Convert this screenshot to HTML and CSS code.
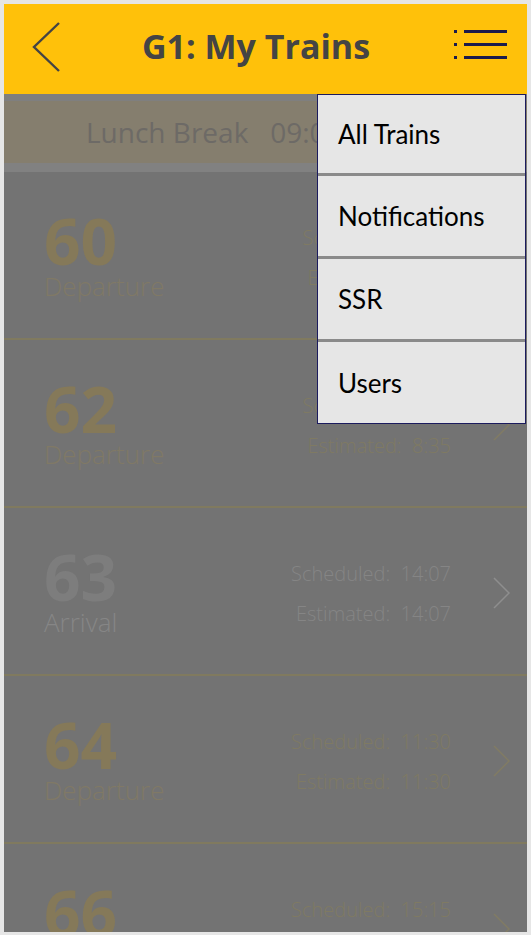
FILE: index.html
```html
<!DOCTYPE html>
<html lang="en">
<head>
    <meta charset="UTF-8">
    <meta name="viewport" content="width=device-width, initial-scale=1.0">
    <title>G1: My Trains</title>
    <link rel="stylesheet" href="styles.css">
</head>
<body>
    <div class="app">
        <div class="header">
            <div class="back-btn">
                <svg width="30" height="52" viewBox="0 0 30 52">
                    <polyline points="27,2 2,26 27,50" fill="none" stroke="#444" stroke-width="2.4"/>
                </svg>
            </div>
            <h1>G1: My Trains</h1>
            <div class="menu-btn">
                <svg width="54" height="32" viewBox="0 0 54 32">
                    <rect x="0" y="1" width="3" height="3" fill="#1b1b4b"/>
                    <rect x="0" y="14" width="3" height="3" fill="#1b1b4b"/>
                    <rect x="0" y="27" width="3" height="3" fill="#1b1b4b"/>
                    <rect x="10" y="1" width="43" height="3" fill="#1b1b4b"/>
                    <rect x="10" y="14" width="43" height="3" fill="#1b1b4b"/>
                    <rect x="10" y="27" width="43" height="3" fill="#1b1b4b"/>
                </svg>
            </div>
        </div>

        <div class="content">
            <div class="top-strip"></div>
            <div class="lunch-bar">Lunch Break   09:00 - 10:00</div>
            <div class="bottom-strip"></div>

            <!-- Train rows -->
            <div class="train-row">
                <div class="train-id">
                    <div class="train-num">60</div>
                    <div class="train-type">Departure</div>
                </div>
                <div class="train-times">
                    <div>Scheduled:  8:05</div>
                    <div>Estimated:  8:05</div>
                </div>
                <div class="chevron">
                    <svg width="18" height="32" viewBox="0 0 18 32"><polyline points="1,1 16,16 1,31" fill="none" stroke="currentColor" stroke-width="1.5"/></svg>
                </div>
            </div>

            <div class="train-row">
                <div class="train-id">
                    <div class="train-num">62</div>
                    <div class="train-type">Departure</div>
                </div>
                <div class="train-times">
                    <div>Scheduled:  8:35</div>
                    <div>Estimated:  8:35</div>
                </div>
                <div class="chevron">
                    <svg width="18" height="32" viewBox="0 0 18 32"><polyline points="1,1 16,16 1,31" fill="none" stroke="currentColor" stroke-width="1.5"/></svg>
                </div>
            </div>

            <div class="train-row arrival">
                <div class="train-id">
                    <div class="train-num">63</div>
                    <div class="train-type">Arrival</div>
                </div>
                <div class="train-times">
                    <div>Scheduled:  14:07</div>
                    <div>Estimated:  14:07</div>
                </div>
                <div class="chevron">
                    <svg width="18" height="32" viewBox="0 0 18 32"><polyline points="1,1 16,16 1,31" fill="none" stroke="currentColor" stroke-width="1.5"/></svg>
                </div>
            </div>

            <div class="train-row">
                <div class="train-id">
                    <div class="train-num">64</div>
                    <div class="train-type">Departure</div>
                </div>
                <div class="train-times">
                    <div>Scheduled:  11:30</div>
                    <div>Estimated:  11:30</div>
                </div>
                <div class="chevron">
                    <svg width="18" height="32" viewBox="0 0 18 32"><polyline points="1,1 16,16 1,31" fill="none" stroke="currentColor" stroke-width="1.5"/></svg>
                </div>
            </div>

            <div class="train-row">
                <div class="train-id">
                    <div class="train-num">66</div>
                    <div class="train-type">Departure</div>
                </div>
                <div class="train-times">
                    <div>Scheduled:  15:15</div>
                    <div>Estimated:  15:15</div>
                </div>
                <div class="chevron">
                    <svg width="18" height="32" viewBox="0 0 18 32"><polyline points="1,1 16,16 1,31" fill="none" stroke="currentColor" stroke-width="1.5"/></svg>
                </div>
            </div>
        </div>

        <!-- Dropdown menu -->
        <div class="dropdown">
            <div class="dropdown-item">All Trains</div>
            <div class="dropdown-item">Notifications</div>
            <div class="dropdown-item">SSR</div>
            <div class="dropdown-item">Users</div>
        </div>
    </div>
</body>
</html>
```

FILE: styles.css
```css
* {
    box-sizing: border-box;
}
body {
    margin: 0;
    background-color: #e6e6e6;
    font-family: "Open Sans", sans-serif;
}
.app {
    position: relative;
    margin: 4px 4px 0 4px;
    width: 523px;
    height: 928px;
    overflow: hidden;
    background-color: #737373;
}
.header {
    height: 90px;
    background-color: #ffc10a;
    display: flex;
    align-items: center;
    padding: 0 19px 0 28px;
}
.back-btn {
    width: 30px;
    height: 52px;
    margin-top: -4px;
}
.header h1 {
    flex: 1;
    margin: 0;
    text-align: center;
    font-size: 34px;
    font-weight: 700;
    color: #444;
    margin-top: -6px;
    padding-right: 4px;
}
.menu-btn {
    width: 54px;
    height: 32px;
    margin-top: -8px;
}
.top-strip {
    height: 7px;
    background-color: #7f7f7f;
}
.lunch-bar {
    height: 62px;
    background-color: #857e6e;
    color: #6d6a66;
    font-size: 28px;
    white-space: pre;
    padding-left: 82px;
    line-height: 62px;
}
.bottom-strip {
    height: 9px;
    background-color: #818181;
}
.train-row {
    height: 168px;
    border-bottom: 2px solid #807a5f;
    display: flex;
    align-items: center;
    padding-left: 40px;
    color: #857959;
}
.train-id {
    flex: 1;
    margin-top: 6px;
}
.train-num {
    font-size: 64px;
    font-weight: 700;
    line-height: 56px;
}
.train-type {
    font-size: 26px;
    font-weight: 300;
    line-height: 34px;
    color: #807966;
}
.train-times {
    text-align: right;
    font-size: 20px;
    font-weight: 300;
    line-height: 40px;
    color: #7f7a63;
    margin-top: 6px;
}
.train-times div {
    white-space: pre;
}
.chevron {
    width: 18px;
    height: 32px;
    margin: 4px 16px 0 42px;
    color: #817b64;
}
.train-row.arrival {
    color: #7d7d7d;
}
.arrival .train-type {
    color: #868686;
}
.arrival .train-times {
    color: #858585;
}
.arrival .chevron {
    color: #8e8e8e;
}
.dropdown {
    position: absolute;
    top: 90px;
    left: 313px;
    width: 209px;
    border: 1px solid #1b1b5e;
    background-color: #e6e6e6;
    font-family: Lato, sans-serif;
}
.dropdown-item {
    height: 83px;
    display: flex;
    align-items: center;
    padding-left: 20px;
    font-size: 26px;
    color: #000;
    border-top: 3px solid #8a8a8a;
}
.dropdown-item:first-child {
    height: 78px;
    border-top: none;
}
.dropdown-item:last-child {
    height: 84px;
}
```
